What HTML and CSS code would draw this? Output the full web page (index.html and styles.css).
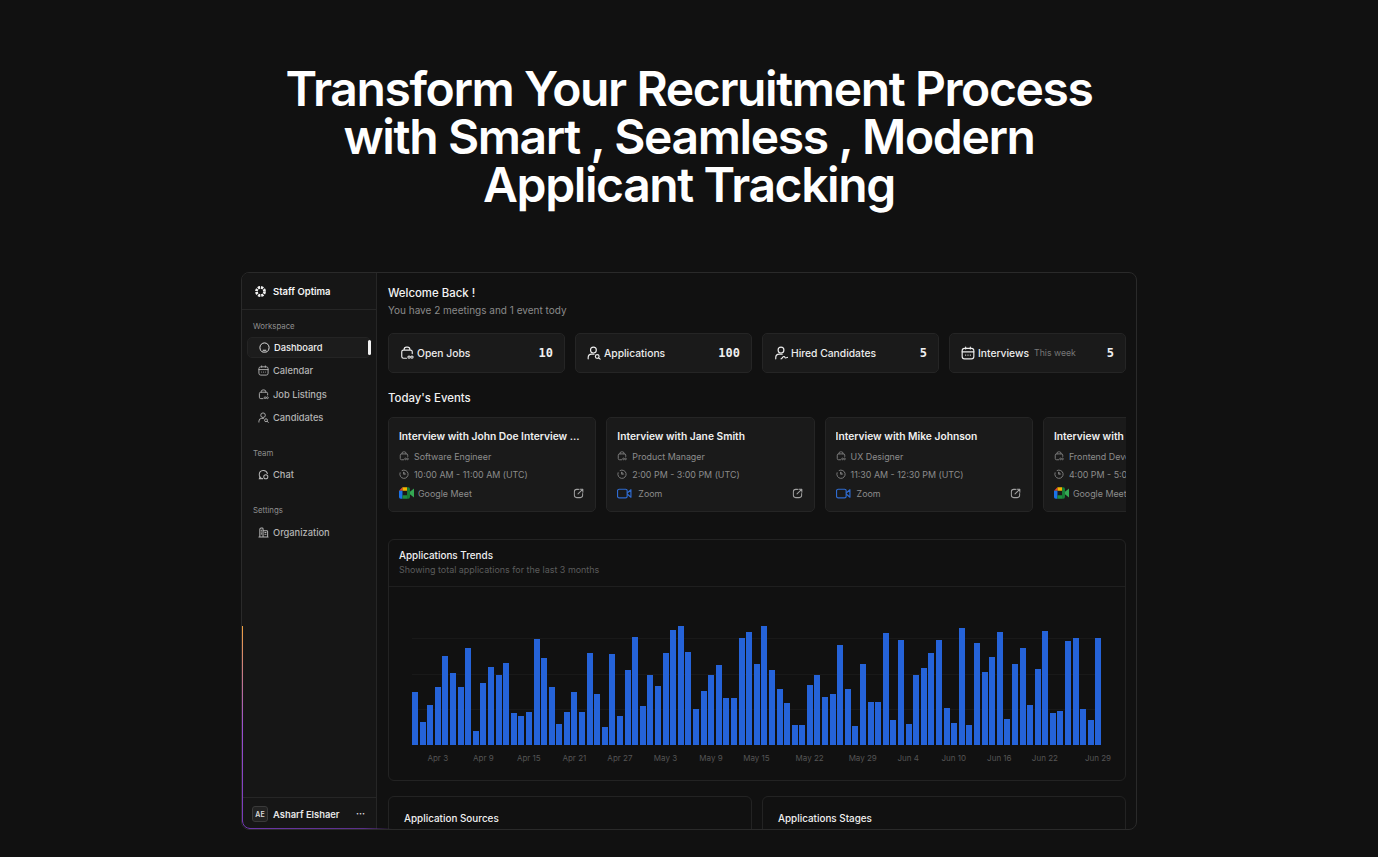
FILE: index.html
```html
<!DOCTYPE html>
<html lang="en">
<head>
    <meta charset="UTF-8">
    <meta name="viewport" content="width=device-width, initial-scale=1.0">
    <title>Staff Optima</title>
    <link rel="stylesheet" href="styles.css">
</head>
<body>
    <svg width="0" height="0" class="defs">
        <symbol id="i-job" viewBox="0 0 24 24"><path d="M11 21H6a3 3 0 0 1-3-3v-8a3 3 0 0 1 3-3h12a3 3 0 0 1 3 3v3M7 7V6a4 4 0 0 1 4-4h2a4 4 0 0 1 4 4v1" fill="none" stroke="currentColor" stroke-width="2" stroke-linecap="round"/><circle cx="15.500" cy="19" r="2" fill="none" stroke="currentColor" stroke-width="1.800"/><circle cx="20.500" cy="19" r="2" fill="none" stroke="currentColor" stroke-width="1.800"/></symbol>
        <symbol id="i-user" viewBox="0 0 24 24"><circle cx="11" cy="7" r="5" fill="none" stroke="currentColor" stroke-width="2"/><path d="M2 22v-2a6 6 0 0 1 6-6h4" fill="none" stroke="currentColor" stroke-width="2" stroke-linecap="round"/><circle cx="17.500" cy="18" r="3.200" fill="none" stroke="currentColor" stroke-width="2"/><path d="M20 20.500l2.500 2" stroke="currentColor" stroke-width="2" stroke-linecap="round"/></symbol>
        <symbol id="i-hired" viewBox="0 0 24 24"><circle cx="12" cy="7" r="5" fill="none" stroke="currentColor" stroke-width="2"/><path d="M3 22v-2a6 6 0 0 1 6-6h5M12 22c2.500 0 2.500-4 5-4s1 2.500 3 2.500 1.500-1 3-1" fill="none" stroke="currentColor" stroke-width="2" stroke-linecap="round"/></symbol>
        <symbol id="i-cal" viewBox="0 0 24 24"><rect x="2" y="4" width="20" height="18" rx="4" fill="none" stroke="currentColor" stroke-width="2"/><path d="M2 10h20M8 2v3M16 2v3" fill="none" stroke="currentColor" stroke-width="2" stroke-linecap="round"/><path d="M8 15.500h.01M12 15.500h.01M16 15.500h.01" stroke="currentColor" stroke-width="2.200" stroke-linecap="round"/></symbol>
        <symbol id="i-home" viewBox="0 0 24 24"><path d="M12 2a10 10 0 0 1 10 10c0 5-3 10-7 10H9c-4 0-7-5-7-10A10 10 0 0 1 12 2z" fill="none" stroke="currentColor" stroke-width="2"/><path d="M9 18h6" stroke="currentColor" stroke-width="2" stroke-linecap="round"/></symbol>
        <symbol id="i-chat" viewBox="0 0 24 24"><path d="M10 21a9 9 0 1 1 10.500-11" fill="none" stroke="currentColor" stroke-width="2.200" stroke-linecap="round"/><path d="M10 21H3l1.500-3.500" fill="none" stroke="currentColor" stroke-width="2.200" stroke-linecap="round"/><circle cx="17" cy="17" r="4.500" fill="none" stroke="currentColor" stroke-width="2.200"/></symbol>
        <symbol id="i-org" viewBox="0 0 24 24"><path d="M4 22V5a3 3 0 0 1 3-3h2a2 2 0 0 1 2 2v18M11 8h8a2 2 0 0 1 2 2v12M2 22h20" fill="none" stroke="currentColor" stroke-width="2.200" stroke-linecap="round"/><path d="M15 12h2.500M15 16h2.500M7 7h1M7 11h1M7 15h1" stroke="currentColor" stroke-width="2.200" stroke-linecap="round"/></symbol>
        <symbol id="i-clock" viewBox="0 0 24 24"><path d="M7.500 3.500A10 10 0 1 1 2.500 9" fill="none" stroke="currentColor" stroke-width="2" stroke-linecap="round"/><path d="M11 7v5.500h4.500z" fill="none" stroke="currentColor" stroke-width="2" stroke-linejoin="round"/></symbol>
        <symbol id="i-open" viewBox="0 0 24 24"><path d="M12 3H8a5 5 0 0 0-5 5v8a5 5 0 0 0 5 5h8a5 5 0 0 0 5-5v-4" fill="none" stroke="currentColor" stroke-width="2.200" stroke-linecap="round"/><path d="M11 13l10-10M15 2.500h6.500V9" fill="none" stroke="currentColor" stroke-width="2.200" stroke-linecap="round" stroke-linejoin="round"/></symbol>
        <symbol id="i-zoom" viewBox="0 0 28 20"><rect x="1" y="2" width="18" height="16" rx="3" fill="none" stroke="currentColor" stroke-width="2.200"/><path d="M19 9l7-6v14l-7-6" fill="none" stroke="currentColor" stroke-width="2.200" stroke-linejoin="round"/></symbol>
        <symbol id="i-meet" viewBox="0 0 26 20"><path d="M6 0v6H0z" fill="#ea4335"/><path d="M6 0h8v6H6z" fill="#f4b400"/><path d="M0 6h6v14H3a3 3 0 0 1-3-3z" fill="#1a73e8"/><path d="M6 14h8v6H6z" fill="#1e8e3e"/><path d="M14 0h2a3 3 0 0 1 3 3v14a3 3 0 0 1-3 3h-2z" fill="#188038"/><path d="M19 8l7-6v16l-7-6z" fill="#34a853"/></symbol>
    </svg>

    <h1 class="hero">Transform Your Recruitment Process<br>with Smart , Seamless , Modern<br>Applicant Tracking</h1>

    <div class="frame">
        <aside class="sidebar">
            <div class="brand">
                <svg class="brand-logo" viewBox="0 0 24 24"><circle cx="12" cy="12" r="7.500" fill="none" stroke="#f2f2f2" stroke-width="5" stroke-dasharray="4.200 1.700"/></svg>
                <span>Staff Optima</span>
            </div>
            <div class="nav">
                <div class="nav-label">Workspace</div>
                <a class="nav-item active"><svg class="nav-icon"><use href="#i-home"/></svg>Dashboard<span class="nav-mark"></span></a>
                <a class="nav-item"><svg class="nav-icon"><use href="#i-cal"/></svg>Calendar</a>
                <a class="nav-item"><svg class="nav-icon"><use href="#i-job"/></svg>Job Listings</a>
                <a class="nav-item"><svg class="nav-icon"><use href="#i-user"/></svg>Candidates</a>
                <div class="nav-label team">Team</div>
                <a class="nav-item"><svg class="nav-icon"><use href="#i-chat"/></svg>Chat</a>
                <div class="nav-label settings">Settings</div>
                <a class="nav-item"><svg class="nav-icon"><use href="#i-org"/></svg>Organization</a>
            </div>
            <div class="account">
                <span class="avatar">AE</span>
                <span class="account-name">Asharf Elshaer</span>
                <span class="account-more">···</span>
            </div>
        </aside>

        <main class="main">
            <h2 class="welcome">Welcome Back !</h2>
            <p class="welcome-sub">You have 2 meetings and 1 event tody</p>

            <div class="stats">
                <div class="stat"><svg class="stat-icon"><use href="#i-job"/></svg><span>Open Jobs</span><b class="stat-num">10</b></div>
                <div class="stat"><svg class="stat-icon"><use href="#i-user"/></svg><span>Applications</span><b class="stat-num">100</b></div>
                <div class="stat"><svg class="stat-icon"><use href="#i-hired"/></svg><span>Hired Candidates</span><b class="stat-num">5</b></div>
                <div class="stat"><svg class="stat-icon"><use href="#i-cal"/></svg><span>Interviews</span><small>This week</small><b class="stat-num">5</b></div>
            </div>

            <h3 class="section-title">Today's Events</h3>
            <div class="events">
                <div class="event">
                    <div class="event-title">Interview with John Doe Interview ...</div>
                    <div class="event-row"><svg class="row-icon"><use href="#i-job"/></svg>Software Engineer</div>
                    <div class="event-row"><svg class="row-icon"><use href="#i-clock"/></svg>10:00 AM - 11:00 AM (UTC)</div>
                    <div class="event-foot"><svg class="meet-icon"><use href="#i-meet"/></svg>Google Meet<svg class="open-icon"><use href="#i-open"/></svg></div>
                </div>
                <div class="event">
                    <div class="event-title">Interview with Jane Smith</div>
                    <div class="event-row"><svg class="row-icon"><use href="#i-job"/></svg>Product Manager</div>
                    <div class="event-row"><svg class="row-icon"><use href="#i-clock"/></svg>2:00 PM - 3:00 PM (UTC)</div>
                    <div class="event-foot"><svg class="zoom-icon"><use href="#i-zoom"/></svg>Zoom<svg class="open-icon"><use href="#i-open"/></svg></div>
                </div>
                <div class="event">
                    <div class="event-title">Interview with Mike Johnson</div>
                    <div class="event-row"><svg class="row-icon"><use href="#i-job"/></svg>UX Designer</div>
                    <div class="event-row"><svg class="row-icon"><use href="#i-clock"/></svg>11:30 AM - 12:30 PM (UTC)</div>
                    <div class="event-foot"><svg class="zoom-icon"><use href="#i-zoom"/></svg>Zoom<svg class="open-icon"><use href="#i-open"/></svg></div>
                </div>
                <div class="event">
                    <div class="event-title">Interview with Sarah Lee</div>
                    <div class="event-row"><svg class="row-icon"><use href="#i-job"/></svg>Frontend Developer</div>
                    <div class="event-row"><svg class="row-icon"><use href="#i-clock"/></svg>4:00 PM - 5:00 PM (UTC)</div>
                    <div class="event-foot"><svg class="meet-icon"><use href="#i-meet"/></svg>Google Meet<svg class="open-icon"><use href="#i-open"/></svg></div>
                </div>
            </div>

            <section class="chart-card">
                <div class="chart-head">
                    <div class="chart-title">Applications Trends</div>
                    <div class="chart-sub">Showing total applications for the last 3 months</div>
                </div>
                <div class="chart-body">
                    <div class="plot">
                        <div class="bars">
                            <i style="height:53px"></i><i style="height:23px"></i><i style="height:40px"></i><i style="height:58px"></i><i style="height:89px"></i><i style="height:72px"></i><i style="height:58px"></i><i style="height:97px"></i><i style="height:14px"></i><i style="height:62px"></i><i style="height:78px"></i><i style="height:70px"></i><i style="height:82px"></i><i style="height:32px"></i><i style="height:29px"></i><i style="height:33px"></i><i style="height:106px"></i><i style="height:87px"></i><i style="height:58px"></i><i style="height:21px"></i><i style="height:33px"></i><i style="height:53px"></i><i style="height:33px"></i><i style="height:92px"></i><i style="height:51px"></i><i style="height:18px"></i><i style="height:91px"></i><i style="height:29px"></i><i style="height:75px"></i><i style="height:108px"></i><i style="height:39px"></i><i style="height:70px"></i><i style="height:59px"></i><i style="height:92px"></i><i style="height:115px"></i><i style="height:119px"></i><i style="height:93px"></i><i style="height:36px"></i><i style="height:54px"></i><i style="height:70px"></i><i style="height:80px"></i><i style="height:47px"></i><i style="height:47px"></i><i style="height:107px"></i><i style="height:113px"></i><i style="height:81px"></i><i style="height:119px"></i>
                            <i style="height:75px"></i><i style="height:56px"></i><i style="height:42px"></i><i style="height:20px"></i><i style="height:20px"></i><i style="height:60px"></i><i style="height:70px"></i><i style="height:48px"></i><i style="height:51px"></i><i style="height:100px"></i><i style="height:56px"></i><i style="height:19px"></i><i style="height:81px"></i><i style="height:43px"></i><i style="height:43px"></i><i style="height:112px"></i><i style="height:25px"></i><i style="height:105px"></i><i style="height:21px"></i><i style="height:70px"></i><i style="height:77px"></i><i style="height:92px"></i><i style="height:105px"></i><i style="height:37px"></i><i style="height:22px"></i><i style="height:117px"></i><i style="height:20px"></i><i style="height:102px"></i><i style="height:73px"></i><i style="height:88px"></i><i style="height:113px"></i><i style="height:26px"></i><i style="height:81px"></i><i style="height:97px"></i><i style="height:40px"></i><i style="height:76px"></i><i style="height:114px"></i><i style="height:32px"></i><i style="height:34px"></i><i style="height:104px"></i><i style="height:107px"></i><i style="height:36px"></i><i style="height:25px"></i><i style="height:107px"></i>
                        </div>
                    </div>
                    <div class="ticks">
                        <span style="grid-column:4">Apr 3</span><span style="grid-column:10">Apr 9</span><span style="grid-column:16">Apr 15</span><span style="grid-column:22">Apr 21</span><span style="grid-column:28">Apr 27</span><span style="grid-column:34">May 3</span><span style="grid-column:40">May 9</span><span style="grid-column:46">May 15</span><span style="grid-column:53">May 22</span><span style="grid-column:60">May 29</span><span style="grid-column:66">Jun 4</span><span style="grid-column:72">Jun 10</span><span style="grid-column:78">Jun 16</span><span style="grid-column:84">Jun 22</span><span style="grid-column:91">Jun 29</span>
                    </div>
                </div>
            </section>

            <div class="bottom-cards">
                <section class="bottom-card">Application Sources</section>
                <section class="bottom-card">Applications Stages</section>
            </div>
        </main>

        <svg class="beam" width="150" height="203" viewBox="0 0 150 203">
            <defs>
                <linearGradient id="beam-left" x1="0" y1="0" x2="0" y2="1"><stop offset="0" stop-color="#f0a040"/><stop offset="0.5" stop-color="#9a4fd0"/><stop offset="1" stop-color="#7438b8"/></linearGradient>
                <linearGradient id="beam-bottom" gradientUnits="userSpaceOnUse" x1="8" y1="0" x2="150" y2="0"><stop offset="0" stop-color="#6d37a8"/><stop offset="0.8" stop-color="#5a3088"/><stop offset="1" stop-color="#5a3088" stop-opacity="0"/></linearGradient>
            </defs>
            <path d="M.5 0V195a7.500 7.500 0 0 0 7.500 7.500" fill="none" stroke="url(#beam-left)"/>
            <path d="M8 202.500H150" fill="none" stroke="url(#beam-bottom)"/>
        </svg>
    </div>
</body>
</html>
```

FILE: styles.css
```css
* {
    box-sizing: border-box;
    margin: 0;
    padding: 0;
}

html, body {
    height: 100%;
    overflow: hidden;
}

body {
    font-family: Inter, "Liberation Sans", sans-serif;
    background-color: #111111;
    color: #f4f4f4;
    display: flex;
    flex-direction: column;
    align-items: center;
}

.defs {
    position: absolute;
}

/* Heading */
.hero {
    margin-top: 65px;
    font-size: 48px;
    line-height: 48px;
    font-weight: 600;
    letter-spacing: -1.380px;
    text-align: center;
    color: #fff;
}

/* App window */
.frame {
    position: relative;
    display: flex;
    width: 896px;
    height: 558px;
    margin-top: 63px;
    border: 1px solid #2a2a2a;
    border-radius: 8px;
    background-color: #111111;
    overflow: hidden;
}

.beam {
    position: absolute;
    left: 0;
    bottom: 0;
}

/* Sidebar */
.sidebar {
    display: flex;
    flex-direction: column;
    flex: none;
    width: 135px;
    background-color: #161616;
    border-right: 1px solid #262626;
}

.brand {
    display: flex;
    align-items: center;
    gap: 6px;
    height: 37px;
    padding-left: 12px;
    border-bottom: 1px solid #262626;
    font-size: 9.500px;
    font-weight: 600;
}

.brand-logo {
    width: 13px;
    height: 13px;
}

.nav {
    flex: 1;
    padding: 10px 5px 0;
}

.nav-label {
    height: 17px;
    padding-left: 6px;
    font-size: 7.800px;
    line-height: 12px;
    color: #8f8f8f;
}

.nav-label.team {
    height: 16px;
    margin-top: 17px;
}

.nav-label.settings {
    margin-top: 17.500px;
}

.nav-item {
    position: relative;
    display: flex;
    align-items: center;
    gap: 4px;
    height: 23.500px;
    padding-left: 11px;
    font-size: 9.300px;
    font-weight: 500;
    color: #b4b4b4;
}

.nav-item.active {
    height: 21px;
    margin-bottom: 1px;
    border: 1px solid #242424;
    border-radius: 5px;
    background-color: #1c1c1c;
    color: #f0f0f0;
}

.nav-icon {
    width: 11px;
    height: 11px;
    flex: none;
}

.nav-mark {
    position: absolute;
    right: -1px;
    top: 2px;
    width: 3px;
    height: 15px;
    border-radius: 2px;
    background-color: #f2f2f2;
}

.account {
    display: flex;
    align-items: center;
    height: 32px;
    padding: 1px 11px 0 10px;
    border-top: 1px solid #262626;
}

.avatar {
    display: flex;
    align-items: center;
    justify-content: center;
    flex: none;
    width: 16px;
    height: 16px;
    border: 1px solid #3a3a3a;
    border-radius: 3px;
    background-color: #222;
    font-size: 7px;
    font-weight: 600;
    color: #ddd;
}

.account-name {
    flex: 1;
    margin-left: 5px;
    font-size: 9.400px;
    font-weight: 600;
    color: #e6e6e6;
}

.account-more {
    font-size: 9px;
    font-weight: 700;
    line-height: 10px;
    color: #ddd;
}

/* Main column */
.main {
    flex: 1;
    min-width: 0;
    padding: 13px 10px 0 11px;
    overflow: hidden;
}

.welcome {
    font-size: 11.400px;
    line-height: 15px;
    font-weight: 500;
    color: #f4f4f4;
}

.welcome-sub {
    margin-top: 2px;
    font-size: 10px;
    line-height: 15px;
    color: #8a8a8a;
}

.stats {
    display: grid;
    grid-template-columns: repeat(4, 1fr);
    gap: 10px;
    margin-top: 15px;
}

.stat {
    display: flex;
    align-items: center;
    height: 40px;
    padding: 0 11px;
    border: 1px solid #252525;
    border-radius: 5px;
    background-color: #1a1a1a;
    font-size: 10.300px;
    font-weight: 500;
    color: #ececec;
}

.stat small {
    margin-left: 5px;
    font-size: 8.700px;
    font-weight: 400;
    color: #777;
}

.stat-icon {
    flex: none;
    width: 14px;
    height: 14px;
    margin-right: 3px;
}

.stat-num {
    margin-left: auto;
    font-family: "DejaVu Sans Mono", "Liberation Mono", monospace;
    font-size: 12px;
    font-weight: 700;
    color: #f0f0f0;
}

.section-title {
    margin-top: 18px;
    font-size: 11.400px;
    line-height: 15px;
    font-weight: 500;
    color: #f0f0f0;
}

.events {
    display: flex;
    gap: 10px;
    margin-top: 11px;
    overflow: hidden;
}

.event {
    flex: none;
    width: 208.300px;
    height: 95px;
    padding: 11px 10px 0;
    border: 1px solid #252525;
    border-radius: 5px;
    background-color: #1a1a1a;
}

.event-title {
    font-size: 10.250px;
    line-height: 14px;
    font-weight: 600;
    color: #f0f0f0;
    white-space: nowrap;
    overflow: hidden;
}

.event-row {
    display: flex;
    align-items: center;
    height: 18px;
    font-size: 8.900px;
    color: #8c8c8c;
    white-space: nowrap;
}

.event-title + .event-row {
    margin-top: 4px;
}

.row-icon {
    flex: none;
    width: 10px;
    height: 10px;
    margin-right: 5px;
}

.event-foot {
    display: flex;
    align-items: center;
    height: 20px;
    font-size: 8.900px;
    color: #8c8c8c;
    white-space: nowrap;
}

.meet-icon {
    flex: none;
    width: 15px;
    height: 12px;
    margin-right: 4px;
}

.zoom-icon {
    flex: none;
    width: 15px;
    height: 11px;
    margin-right: 6px;
    color: #2f6bd0;
}

.open-icon {
    flex: none;
    width: 11px;
    height: 11px;
    margin-left: auto;
    margin-right: 1px;
    color: #a0a0a0;
}

/* Chart */
.chart-card {
    height: 242px;
    margin-top: 27px;
    border: 1px solid #232323;
    border-radius: 6px;
}

.chart-head {
    height: 47px;
    padding: 8px 10px 0;
    border-bottom: 1px solid #1f1f1f;
}

.chart-title {
    font-size: 9.900px;
    line-height: 14px;
    font-weight: 500;
    color: #f0f0f0;
}

.chart-sub {
    margin-top: 1px;
    font-size: 8.950px;
    line-height: 13px;
    color: #5c5c5c;
}

.chart-body {
    padding: 0 24px 0 23px;
}

.plot {
    height: 158px;
    display: flex;
    align-items: flex-end;
    background:
        linear-gradient(#191919, #191919) 0 51px / 100% 1px no-repeat,
        linear-gradient(#191919, #191919) 0 87px / 100% 1px no-repeat,
        linear-gradient(#191919, #191919) 0 122px / 100% 1px no-repeat;
}

.bars {
    display: flex;
    align-items: flex-end;
    gap: 1.580px;
    width: 100%;
}

.bars i {
    display: block;
    flex: 1;
    background-color: #2563d9;
}

.ticks {
    display: grid;
    grid-template-columns: repeat(91, minmax(0, 1fr));
    column-gap: 1.580px;
    margin-top: 7px;
    font-size: 8px;
    line-height: 12px;
    color: #555;
}

.ticks span {
    grid-row: 1;
    justify-self: center;
    white-space: nowrap;
}

/* Bottom cards, cut off by the window */
.bottom-cards {
    display: grid;
    grid-template-columns: 1fr 1fr;
    gap: 10px;
    margin-top: 15px;
}

.bottom-card {
    height: 60px;
    padding: 15px;
    border: 1px solid #232323;
    border-radius: 6px;
    font-size: 9.900px;
    font-weight: 500;
    color: #f0f0f0;
}
```
